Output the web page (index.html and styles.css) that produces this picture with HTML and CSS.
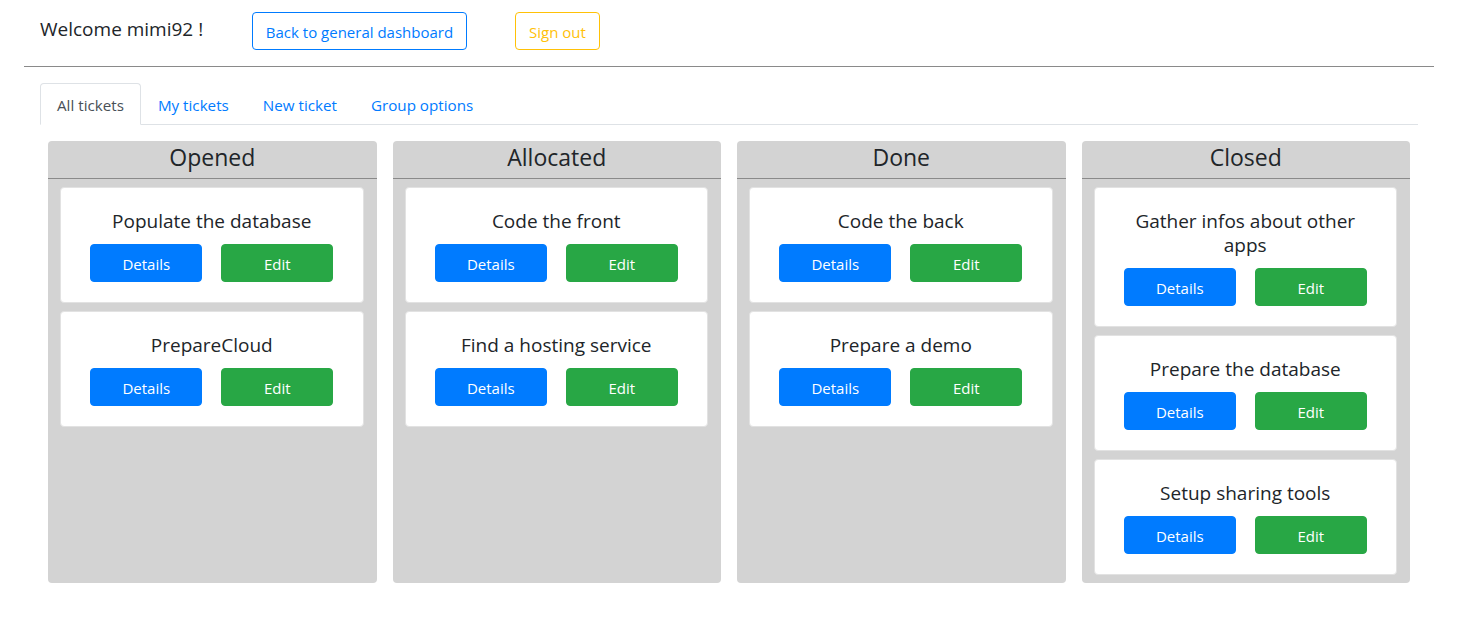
FILE: index.html
```html
<!DOCTYPE html>
<html lang="en">
<head>
<meta charset="utf-8">
<title>Tickets</title>
<link rel="stylesheet" href="styles.css">
</head>
<body>
<header class="top">
  <span class="welcome">Welcome mimi92 !</span>
  <a class="btn btn-outline-primary" href="#">Back to general dashboard</a>
  <a class="btn btn-outline-warning" href="#">Sign out</a>
</header>
<hr class="sep">
<nav class="tabs">
  <a class="tab active" href="#">All tickets</a>
  <a class="tab" href="#">My tickets</a>
  <a class="tab" href="#">New ticket</a>
  <a class="tab" href="#">Group options</a>
</nav>
<main class="board">
  <section class="column">
    <h2 class="column-title">Opened</h2>
    <div class="cards">
      <div class="card"><h3 class="card-title">Populate the database</h3><div class="actions"><a class="btn btn-primary" href="#">Details</a><a class="btn btn-success" href="#">Edit</a></div></div>
      <div class="card"><h3 class="card-title">PrepareCloud</h3><div class="actions"><a class="btn btn-primary" href="#">Details</a><a class="btn btn-success" href="#">Edit</a></div></div>
    </div>
  </section>
  <section class="column">
    <h2 class="column-title">Allocated</h2>
    <div class="cards">
      <div class="card"><h3 class="card-title">Code the front</h3><div class="actions"><a class="btn btn-primary" href="#">Details</a><a class="btn btn-success" href="#">Edit</a></div></div>
      <div class="card"><h3 class="card-title">Find a hosting service</h3><div class="actions"><a class="btn btn-primary" href="#">Details</a><a class="btn btn-success" href="#">Edit</a></div></div>
    </div>
  </section>
  <section class="column">
    <h2 class="column-title">Done</h2>
    <div class="cards">
      <div class="card"><h3 class="card-title">Code the back</h3><div class="actions"><a class="btn btn-primary" href="#">Details</a><a class="btn btn-success" href="#">Edit</a></div></div>
      <div class="card"><h3 class="card-title">Prepare a demo</h3><div class="actions"><a class="btn btn-primary" href="#">Details</a><a class="btn btn-success" href="#">Edit</a></div></div>
    </div>
  </section>
  <section class="column">
    <h2 class="column-title">Closed</h2>
    <div class="cards">
      <div class="card"><h3 class="card-title">Gather infos about other apps</h3><div class="actions"><a class="btn btn-primary" href="#">Details</a><a class="btn btn-success" href="#">Edit</a></div></div>
      <div class="card"><h3 class="card-title">Prepare the database</h3><div class="actions"><a class="btn btn-primary" href="#">Details</a><a class="btn btn-success" href="#">Edit</a></div></div>
      <div class="card"><h3 class="card-title">Setup sharing tools</h3><div class="actions"><a class="btn btn-primary" href="#">Details</a><a class="btn btn-success" href="#">Edit</a></div></div>
    </div>
  </section>
</main>
</body>
</html>
```

FILE: styles.css
```css
* { box-sizing: border-box; }

body {
  margin: 0;
  font-family: "Open Sans", "Noto Sans", sans-serif;
  font-size: 16px;
  line-height: 1.5;
  color: #212529;
  background: #fff;
}

a { text-decoration: none; }

.top {
  display: flex;
  align-items: center;
  padding: 12px 0 0 40px;
}

.welcome {
  flex: 0 0 212px;
  font-size: 19px;
  line-height: 24px;
  margin-top: -4px;
}

.btn {
  display: inline-flex;
  align-items: center;
  justify-content: center;
  height: 38px;
  padding: 1px 12px 0;
  border: 1px solid transparent;
  border-radius: 4px;
  font-size: 15px;
  line-height: 24px;
}

.btn-outline-primary {
  color: #007bff;
  border-color: #007bff;
  width: 215px;
}

.btn-outline-warning {
  color: #ffc107;
  border-color: #ffc107;
  width: 85px;
  margin-left: 48px;
}

.sep {
  margin: 16px 39px 0 24px;
  border: 0;
  border-top: 1px solid #8a8a8a;
  height: 0;
}

.tabs {
  display: flex;
  margin: 16px 55px 0 40px;
  border-bottom: 1px solid #dee2e6;
}

.tab {
  display: block;
  padding: 9px 16px 7px;
  border: 1px solid transparent;
  border-radius: 4px 4px 0 0;
  margin-bottom: -1px;
  color: #007bff;
  font-size: 15.2px;
  line-height: 24px;
}

.tab.active {
  color: #495057;
  background: #fff;
  border-color: #dee2e6 #dee2e6 #fff;
}

.board {
  display: grid;
  grid-template-columns: repeat(4, 1fr);
  gap: 16px;
  margin: 16px 55px 0 40px;
  padding: 0 8px;
  align-items: stretch;
}

.column {
  background: #d3d3d3;
  border-radius: 4px;
}

.column-title {
  margin: 0;
  font-size: 23px;
  font-weight: 400;
  line-height: 33px;
  padding-bottom: 4px;
  height: 38px;
  text-align: center;
  border-bottom: 1px solid #8a8a8a;
}

.cards {
  display: flex;
  flex-direction: column;
  gap: 8px;
  padding: 8px 13px 8px 12px;
}

.card {
  background: #fff;
  border: 1px solid #e2e2e2;
  border-radius: 4px;
  padding: 21px 20px 20px;
  text-align: center;
}

.card-title {
  margin: 0 0 11px;
  font-size: 19px;
  font-weight: 400;
  line-height: 24px;
}

.actions {
  display: flex;
  justify-content: center;
  gap: 19px;
}

.btn-primary,
.btn-success {
  width: 112px;
  color: #fff;
}

.btn-primary {
  background: #007bff;
  border-color: #007bff;
}

.btn-success {
  background: #28a745;
  border-color: #28a745;
}
```
